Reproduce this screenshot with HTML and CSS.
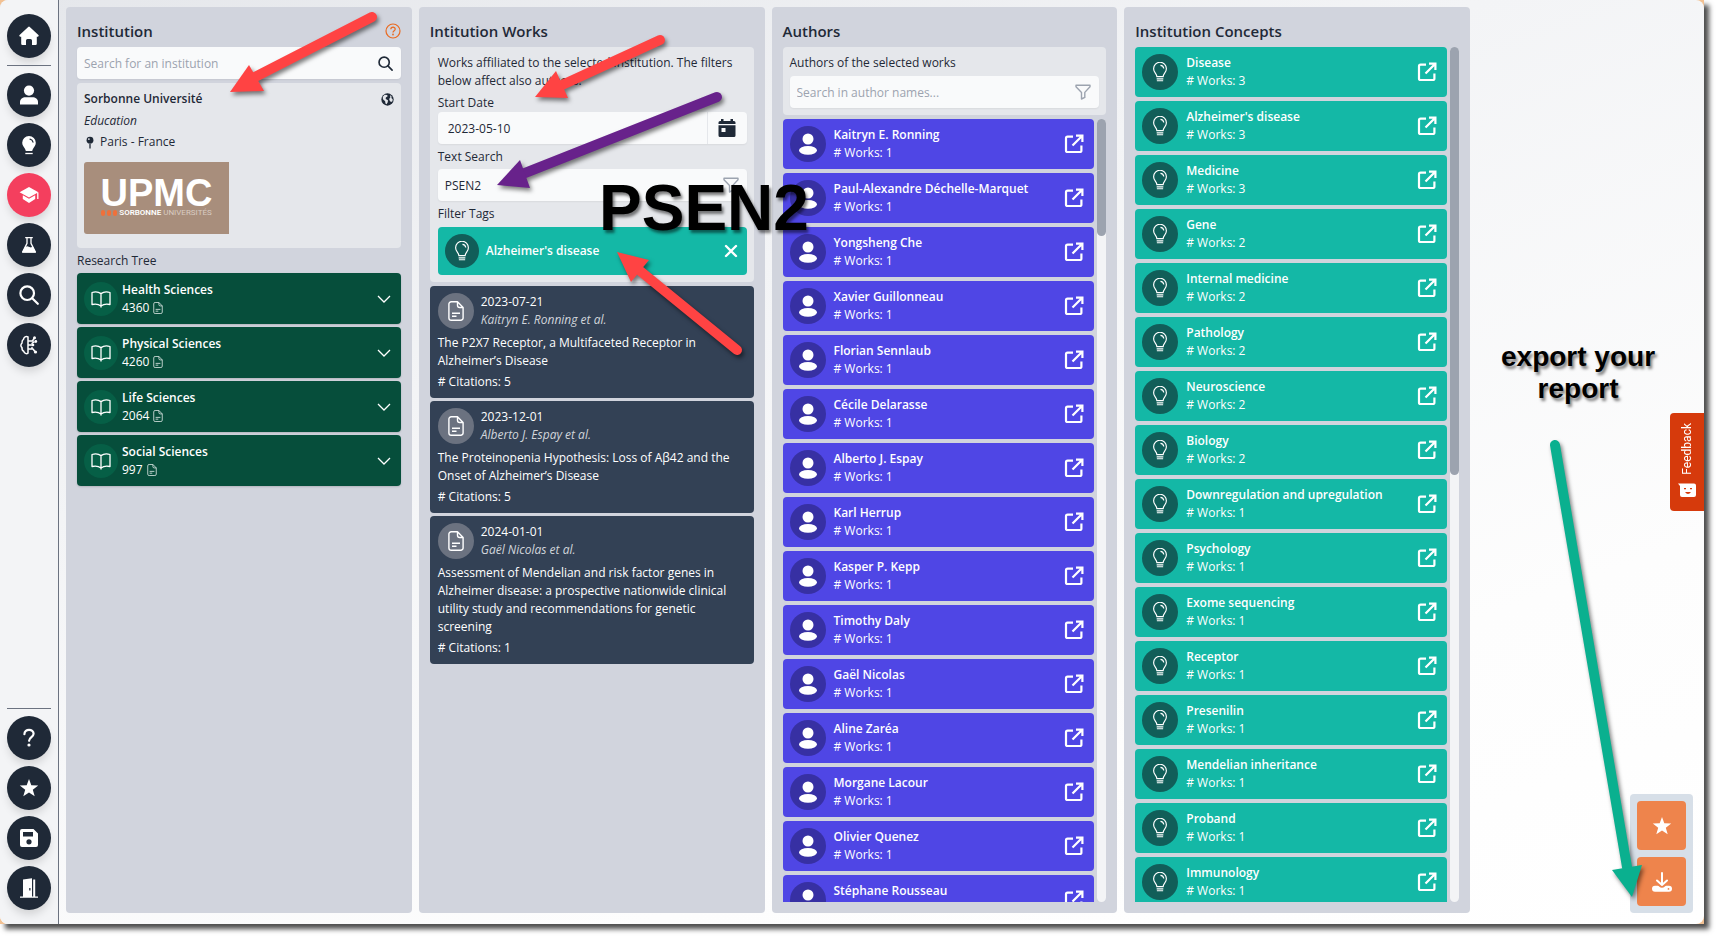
FILE: index.html
```html
<!DOCTYPE html>
<html lang="en">
<head>
<meta charset="utf-8">
<title>Institution explorer</title>
<link rel="stylesheet" href="styles.css">
</head>
<body>
<svg class="sprite" aria-hidden="true">
  <symbol id="home" viewBox="0 0 20 20"><path fill="currentColor" d="M9.2.9a1.2 1.2 0 0 1 1.6 0l8.6 8.2c.7.7.3 1.6-.6 1.6h-1v7a1.2 1.2 0 0 1-1.200 1.200H13v-4.500a1.500 1.500 0 0 0-1.500-1.500h-3A1.500 1.500 0 0 0 7 14.400v4.500H3.400a1.200 1.200 0 0 1-1.200-1.200v-7h-1c-.9 0-1.300-.9-.6-1.600z"/></symbol>
  <symbol id="person" viewBox="0 0 20 20"><circle cx="10" cy="5.600" r="5.100" fill="currentColor"/><path fill="currentColor" d="M1 19.400v-2.200c0-3.200 2.600-5 5.500-5h7c2.900 0 5.500 1.800 5.500 5v2.200z"/></symbol>
  <symbol id="avatar" viewBox="0 0 20 22"><circle cx="10" cy="6" r="5.500" fill="currentColor"/><ellipse cx="10" cy="17.300" rx="9" ry="4.400" fill="currentColor"/></symbol>
  <symbol id="bulb-solid" viewBox="0 0 20 20"><path fill="currentColor" d="M10 1a6.800 6.800 0 0 0-6.800 6.800c0 3 2 4.300 3 6.400.3.700.3 1.800 1 1.800h5.600c.7 0 .7-1.100 1-1.800 1-2.100 3-3.400 3-6.400A6.800 6.800 0 0 0 10 1z"/><path d="M11 4.200q2.500.5 3 3" fill="none" stroke="#1f2937" stroke-width="1.200" stroke-linecap="round"/><path d="M6.300 18.500h7.400" stroke="currentColor" stroke-width="1.300"/></symbol>
  <symbol id="bulb" viewBox="0 0 20 22"><g fill="none" stroke="currentColor" stroke-width="1.300"><path d="M6.500 16.200c0-3.600-3.600-4.600-3.600-8.900a7.100 7.100 0 0 1 14.200 0c0 4.300-3.600 5.300-3.600 8.900z" stroke-linejoin="round"/><path d="M10.500 3.600c2 .2 3.400 1.600 3.700 3.500M6.300 18.600h7.400M6.500 20.700h7"/></g></symbol>
  <symbol id="cap" viewBox="0 0 20 20"><path fill="currentColor" d="M10 2 .6 7.200 10 12.400l9.400-5.200z"/><path fill="currentColor" d="M3.800 10.200v3.700L10 18l6.200-4.100v-3.700L10 13.700z"/><path d="M18.800 7.500v6.500" stroke="currentColor" stroke-width="1.300"/></symbol>
  <symbol id="flask" viewBox="0 0 20 20"><path d="M6.200 2.600h7.600M8 2.600v5.800L3.600 17h12.800L12 8.400V2.600" fill="none" stroke="currentColor" stroke-width="1.300" stroke-linejoin="round"/><path fill="currentColor" d="m6 12 2.200-.8 3.800 1.300 1.800-1.300 3.200 6.300H3z"/></symbol>
  <symbol id="search" viewBox="0 0 20 20"><g fill="none" stroke="currentColor" stroke-width="2.200" stroke-linecap="round"><circle cx="8.200" cy="8.200" r="6.800"/><path d="m13.200 13.200 5.600 5.600"/></g></symbol>
  <symbol id="brain" viewBox="0 0 20 20"><g fill="none" stroke="currentColor" stroke-width="1.500" stroke-linejoin="round" stroke-linecap="round"><path d="M9 1.800C7 .8 4.800 2 4.500 4.400 2.500 5.600 3.200 7 3 8 1.400 9.500 1.600 11.500 3 12.600c-.2 2 .4 3 1.700 3.600.5 2.200 2.800 3 4.300 2zM9 6h4.500l1.500-2.500M9 10h4M9 14h5l1.500 2M13 8.300l2-1.300M13 14v-1.500"/></g><g fill="currentColor"><circle cx="15.500" cy="2.800" r="1.500"/><circle cx="16.800" cy="6.500" r="1.400"/><circle cx="14" cy="10" r="1.300"/><circle cx="16.500" cy="17" r="1.600"/></g></symbol>
  <symbol id="question" viewBox="0 0 20 20"><path d="M5.400 6.200c0-6 9.400-5.500 9.200-.4-.1 3.400-4.500 3.300-4.500 7" fill="none" stroke="currentColor" stroke-width="2.200" stroke-linecap="round"/><circle cx="10" cy="17" r="1.600" fill="currentColor"/></symbol>
  <symbol id="help-ring" viewBox="0 0 16 16"><circle cx="8" cy="8" r="7" fill="none" stroke="currentColor" stroke-width="1.200"/><path d="M5.800 6.300c.1-2.900 4.500-2.700 4.400-.1C10.100 7.700 8 7.700 8 9.500" fill="none" stroke="currentColor" stroke-width="1.200"/><circle cx="8" cy="11.500" r=".9" fill="currentColor"/></symbol>
  <symbol id="star" viewBox="0 0 20 20"><path fill="currentColor" d="m10 1 2.300 6.200 6.900.3-5.400 4.200 1.900 6.500L10 14.500l-5.700 3.700 1.900-6.500L.8 7.500l6.900-.3z"/></symbol>
  <symbol id="save" viewBox="0 0 20 20"><path fill="currentColor" fill-rule="evenodd" d="M3 1h11.500L19 5.500V17a2 2 0 0 1-2 2H3a2 2 0 0 1-2-2V3a2 2 0 0 1 2-2zm1 3v4.600h10V4zm6 7.200a2.600 2.600 0 1 0 0 5.200 2.600 2.600 0 0 0 0-5.200z"/></symbol>
  <symbol id="door" viewBox="0 0 20 20"><path fill="currentColor" fill-rule="evenodd" d="M4 1.600 13 .2v18.200h1.200V1.500h2V18.400H19v1.400H1v-1.400h3zM10.200 10v2.500h1.300V10z"/></symbol>
  <symbol id="globe" viewBox="0 0 16 16"><circle cx="8" cy="8" r="7.600" fill="currentColor"/><path fill="#e5e7eb" d="M2.200 4.500 4.600 2.200l3 .2.600 1.700L6 5.500l-.2 1.800L8.600 9l-.3 2.300-1.500 2.500-1.300-.8-.4-3L2.400 7.800zM11 2.500l2.200 2-.5 1.800 1.700 1.500-.3 2.400-1.700 1-1.500-1.500L10 7.500l1.500-2z"/></symbol>
  <symbol id="pin" viewBox="0 0 10 14"><circle cx="5" cy="4.500" r="3.700" fill="currentColor"/><path d="M5 8v5.500" stroke="currentColor" stroke-width="1.400"/><circle cx="3.800" cy="3.300" r="1" fill="#e5e7eb"/></symbol>
  <symbol id="book" viewBox="0 0 20 18"><path d="M10 3.600C7.500 1.800 4 1.600 1 2.500v12c3-.8 6.500-.5 9 1.500 2.500-2 6-2.300 9-1.500v-12c-3-.9-6.500-.7-9 1.100zm0 0V17.500" fill="none" stroke="currentColor" stroke-width="1.300" stroke-linejoin="round"/></symbol>
  <symbol id="doc" viewBox="0 0 16 20"><path d="M9.500.8H3.200A2.300 2.300 0 0 0 .9 3.100v13.800a2.300 2.300 0 0 0 2.300 2.300h9.600a2.300 2.300 0 0 0 2.300-2.300V6.500zM9.500.8v3.500a2.200 2.200 0 0 0 2.200 2.200h3.400M4 12.300h8M4 15.300h4.500" fill="none" stroke="currentColor" stroke-width="1.400" stroke-linejoin="round"/></symbol>
  <symbol id="chevron" viewBox="0 0 14 8"><path d="m1 1 6 6 6-6" fill="none" stroke="currentColor" stroke-width="1.300"/></symbol>
  <symbol id="calendar" viewBox="0 0 18 20"><path fill="currentColor" d="M3 1h2.500v2h7V1H15v2h1a1.500 1.500 0 0 1 1.500 1.500V6H.5V4.500A1.500 1.500 0 0 1 2 3h1z"/><path fill="currentColor" fill-rule="evenodd" d="M.5 7.200h17v10.300A1.500 1.500 0 0 1 16 19H2a1.500 1.500 0 0 1-1.500-1.500zM3.500 10v4h4v-4z"/></symbol>
  <symbol id="funnel" viewBox="0 0 16 16"><path d="M1 1.200h14v1.500L9.800 8.400v5L6.500 15V8.400L1 2.700z" fill="none" stroke="currentColor" stroke-width="1.400" stroke-linejoin="round"/></symbol>
  <symbol id="close" viewBox="0 0 14 14"><path d="m2 2 10 10M12 2 2 12" stroke="currentColor" stroke-width="2.400" stroke-linecap="round"/></symbol>
  <symbol id="external" viewBox="0 0 20 20"><path d="M9 2.600H3.600A1.600 1.600 0 0 0 2 4.200v12.200A1.600 1.600 0 0 0 3.600 18h12.200a1.600 1.600 0 0 0 1.600-1.600V11.500M12 1.600h6.400V8M18 2 8.500 11.600" fill="none" stroke="currentColor" stroke-width="2.200"/></symbol>
  <symbol id="download" viewBox="0 0 20 20"><path d="M10 1v11.500M5 8.500l5 4.500 5-4.500" fill="none" stroke="currentColor" stroke-width="2" stroke-linecap="round" stroke-linejoin="round"/><path fill="currentColor" fill-rule="evenodd" d="M3 13.700h2.800c1 0 2 2 4.200 2s3.200-2 4.200-2H17a3 3 0 0 1 0 6H3a3 3 0 0 1 0-6zm13.500 2.300a.9.900 0 1 0 0 1.800.9.900 0 0 0 0-1.800z"/></symbol>
  <symbol id="smile" viewBox="0 0 18 14"><path fill="#fff" d="M0 .5h16a2 2 0 0 1 2 2V12a2 2 0 0 1-2 2H4a2 2 0 0 1-2-2V3z"/><path fill="#d63a0c" d="M7 9h6q-3 4-6 0zM6 5h2v1.200H6zM12 5h2v1.200h-2z"/></symbol>
</svg>

<div class="window">
<div class="app">
  <nav class="sidebar" aria-label="Main">
    <div class="nav-group nav-top">
      <button class="nav-button" aria-label="Home"><svg><use href="#home"/></svg></button>
      <hr>
      <button class="nav-button" aria-label="Authors"><svg><use href="#person"/></svg></button>
      <button class="nav-button" aria-label="Concepts"><svg><use href="#bulb-solid"/></svg></button>
      <button class="nav-button active" aria-label="Institutions"><svg><use href="#cap"/></svg></button>
      <button class="nav-button" aria-label="Research"><svg><use href="#flask"/></svg></button>
      <button class="nav-button" aria-label="Search"><svg><use href="#search"/></svg></button>
      <button class="nav-button" aria-label="Knowledge"><svg><use href="#brain"/></svg></button>
    </div>
    <div class="nav-group">
      <hr>
      <button class="nav-button" aria-label="Help"><svg><use href="#question"/></svg></button>
      <button class="nav-button" aria-label="Favourites"><svg><use href="#star"/></svg></button>
      <button class="nav-button" aria-label="Save"><svg><use href="#save"/></svg></button>
      <button class="nav-button" aria-label="Log out"><svg><use href="#door"/></svg></button>
    </div>
  </nav>

  <main class="board">
    <section class="column">
      <header class="column-head"><h2>Institution</h2><button class="help" aria-label="About institutions"><svg><use href="#help-ring"/></svg></button></header>
      <div class="field search-field"><input type="text" aria-label="Search for an institution" placeholder="Search for an institution"><button aria-label="Search"><svg class="icon-dark"><use href="#search"/></svg></button></div>
      <article class="institution">
        <div class="institution-name"><h3>Sorbonne Université</h3><a href="#web" aria-label="Website"><svg><use href="#globe"/></svg></a></div>
        <p class="kind">Education</p>
        <p class="place"><svg><use href="#pin"/></svg>Paris - France</p>
        <div class="logo">
          <span class="logo-name">UPMC</span>
          <span class="logo-sub"><i></i><i></i><i></i><b>SORBONNE</b><span>UNIVERSITÉS</span></span>
        </div>
      </article>
      <h3 class="tree-title">Research Tree</h3>
      <div class="tree">
        <button class="card green"><span class="disc"><svg class="i-book"><use href="#book"/></svg></span><span class="card-text"><strong>Health Sciences</strong><span>4360 <svg><use href="#doc"/></svg></span></span><svg class="i-chevron"><use href="#chevron"/></svg></button>
        <button class="card green"><span class="disc"><svg class="i-book"><use href="#book"/></svg></span><span class="card-text"><strong>Physical Sciences</strong><span>4260 <svg><use href="#doc"/></svg></span></span><svg class="i-chevron"><use href="#chevron"/></svg></button>
        <button class="card green"><span class="disc"><svg class="i-book"><use href="#book"/></svg></span><span class="card-text"><strong>Life Sciences</strong><span>2064 <svg><use href="#doc"/></svg></span></span><svg class="i-chevron"><use href="#chevron"/></svg></button>
        <button class="card green"><span class="disc"><svg class="i-book"><use href="#book"/></svg></span><span class="card-text"><strong>Social Sciences</strong><span>997 <svg><use href="#doc"/></svg></span></span><svg class="i-chevron"><use href="#chevron"/></svg></button>
      </div>
    </section>

    <section class="column">
      <header class="column-head"><h2>Intitution Works</h2></header>
      <form class="panel filters">
        <p>Works affiliated to the selected institution. The filters below affect also authors.</p>
        <label for="start">Start Date</label>
        <div class="field date-field"><input id="start" type="text" value="2023-05-10"><button type="button" aria-label="Pick a date"><svg><use href="#calendar"/></svg></button></div>
        <label for="text">Text Search</label>
        <div class="field"><input id="text" type="text" value="PSEN2"><svg class="i-funnel"><use href="#funnel"/></svg></div>
        <h3>Filter Tags</h3>
        <div class="tag"><span class="disc"><svg class="i-bulb"><use href="#bulb"/></svg></span><strong>Alzheimer's disease</strong><button type="button" aria-label="Remove tag"><svg><use href="#close"/></svg></button></div>
      </form>
      <div class="works">
        <article class="work"><header><span class="disc"><svg class="i-doc"><use href="#doc"/></svg></span><div><time>2023-07-21</time><em>Kaitryn E. Ronning et al.</em></div></header><p>The P2X7 Receptor, a Multifaceted Receptor in Alzheimer’s Disease</p><footer># Citations: 5</footer></article>
        <article class="work"><header><span class="disc"><svg class="i-doc"><use href="#doc"/></svg></span><div><time>2023-12-01</time><em>Alberto J. Espay et al.</em></div></header><p>The Proteinopenia Hypothesis: Loss of Aβ42 and the Onset of Alzheimer’s Disease</p><footer># Citations: 5</footer></article>
        <article class="work"><header><span class="disc"><svg class="i-doc"><use href="#doc"/></svg></span><div><time>2024-01-01</time><em>Gaël Nicolas et al.</em></div></header><p>Assessment of Mendelian and risk factor genes in Alzheimer disease: a prospective nationwide clinical utility study and recommendations for genetic screening</p><footer># Citations: 1</footer></article>
      </div>
    </section>

    <section class="column">
      <header class="column-head"><h2>Authors</h2></header>
      <div class="panel author-filter">
        <label for="author">Authors of the selected works</label>
        <div class="field"><input id="author" type="text" placeholder="Search in author names..."><svg class="i-funnel"><use href="#funnel"/></svg></div>
      </div>
      <div class="scroller">
        <ul class="list" id="authors"></ul>
        <div class="track"><div class="thumb thumb-authors"></div></div>
      </div>
    </section>

    <section class="column">
      <header class="column-head"><h2>Institution Concepts</h2></header>
      <div class="scroller">
        <ul class="list" id="concepts"></ul>
        <div class="track"><div class="thumb thumb-concepts"></div></div>
      </div>
    </section>

    <aside class="side">
      <div class="export">
        <button aria-label="Add to favourites"><svg><use href="#star"/></svg></button>
        <button aria-label="Export report"><svg><use href="#download"/></svg></button>
      </div>
    </aside>
  </main>
  <button class="feedback"><svg><use href="#smile"/></svg><span>Feedback</span></button>
</div>
</div>

<svg class="notes" aria-hidden="true">
  <g fill="#ff4343" stroke="#ff4343" stroke-width="10" stroke-linecap="round">
    <path d="M372 17 255 77"/><path stroke="none" d="m230 92 19-27 15 26z"/>
    <path d="m660 40-98 45"/><path stroke="none" d="m535 97 21-26 12 27z"/>
    <path d="m737 350-98-80"/><path stroke="none" d="m617 252 32 8-18 22z"/>
  </g>
  <g fill="#68228b" stroke="#68228b" stroke-width="10" stroke-linecap="round"><path d="m717 97-192 76"/><path stroke="none" d="m497 185 23-25 10 28z"/></g>
  <g fill="#0ab08f" stroke="#0ab08f" stroke-width="10" stroke-linecap="round"><path d="m1555 445 72 422"/><path stroke="none" d="m1632 897-20-27 30-5z"/></g>
</svg>
<p class="note note-gene">PSEN2</p>
<p class="note note-export">export your<br>report</p>
<script src="lists.js"></script>
</body>
</html>
```

FILE: lists.js
```js
const authors = ["Kaitryn E. Ronning", "Paul-Alexandre Déchelle-Marquet", "Yongsheng Che", "Xavier Guillonneau", "Florian Sennlaub", "Cécile Delarasse", "Alberto J. Espay", "Karl Herrup", "Kasper P. Kepp", "Timothy Daly", "Gaël Nicolas", "Aline Zaréa", "Morgane Lacour", "Olivier Quenez", "Stéphane Rousseau"].map(name => [name, 1]);
const concepts = [["Disease", 3], ["Alzheimer's disease", 3], ["Medicine", 3], ["Gene", 2], ["Internal medicine", 2], ["Pathology", 2], ["Neuroscience", 2], ["Biology", 2], ["Downregulation and upregulation", 1], ["Psychology", 1], ["Exome sequencing", 1], ["Receptor", 1], ["Presenilin", 1], ["Mendelian inheritance", 1], ["Proband", 1], ["Immunology", 1]];

function fill(id, rows, tone, icon) {
  document.getElementById(id).innerHTML = rows.map(([name, works]) =>
    `<li class="card ${tone}"><span class="disc"><svg class="i-${icon}"><use href="#${icon}"/></svg></span>` +
    `<div class="card-text"><strong>${name}</strong><span># Works: ${works}</span></div>` +
    `<a class="open" href="#open" aria-label="Open ${name}"><svg><use href="#external"/></svg></a></li>`).join("");
}

fill("authors", authors, "indigo", "avatar");
fill("concepts", concepts, "teal", "bulb");
```

FILE: styles.css
```css
* { box-sizing: border-box; }
html, body { height: 100%; }
body {
  margin: 0;
  padding: 0 15px 15px 0;
  overflow: hidden;
  background: #fff;
  color: #1f2937;
  font: 12px/18px "Open Sans", "Noto Sans", sans-serif;
}
h2, h3, p, ul { margin: 0; padding: 0; }
h3 { font-size: 12px; font-weight: 400; }
button { margin: 0; padding: 0; border: 0; background: none; color: inherit; font: inherit; cursor: pointer; }
svg { display: block; flex: none; }
a { color: inherit; }
.sprite { position: absolute; width: 0; height: 0; }

.window { height: 100%; background: #f2c193; box-shadow: 5px 5px 5px rgba(0, 0, 0, .7); }
.app {
  position: relative;
  display: flex;
  height: 100%;
  border-radius: 8px;
  background: linear-gradient(160deg, #e5e7eb 0%, #f3f4f6 35%, #fdfdfd 75%, #fff 100%);
}

.sidebar {
  display: flex;
  flex-direction: column;
  justify-content: space-between;
  flex: none;
  width: 59px;
  padding: 14px 7px;
  border-right: 1px solid #6b7280;
  border-radius: 8px 0 0 8px;
  background: #f3f4f6;
}
.nav-group { display: flex; flex-direction: column; gap: 6px; }
.nav-group hr { width: 100%; height: 1px; margin: 1px 0; border: 0; background: #6b7280; }
.nav-button {
  display: grid;
  place-items: center;
  width: 44px;
  height: 44px;
  border-radius: 50%;
  background: #1f2937;
  color: #fff;
  box-shadow: 0 6px 10px -2px rgba(0, 0, 0, .15);
}
.nav-button svg { width: 20px; height: 20px; }
.nav-button.active { background: #f43f5e; }

.board { display: flex; flex: 1; min-width: 0; gap: 7px; padding: 7px 0 11px 7px; }
.column {
  display: flex;
  flex-direction: column;
  flex: 1 1 0;
  min-width: 0;
  padding: 11px;
  border-radius: 4px;
  background: #d1d4dd;
}
.column-head { display: flex; align-items: center; justify-content: space-between; flex: none; height: 29px; padding-bottom: 3px; }
.column-head h2 { font-size: 15px; font-weight: 600; line-height: 24px; }
.help { color: #ea6a20; }
.help svg { width: 16px; height: 16px; }

.field {
  display: flex;
  align-items: center;
  height: 32px;
  border-radius: 4px;
  background: #f9fafb;
  box-shadow: 0 1px 2px rgba(0, 0, 0, .06);
}
.field input {
  flex: 1;
  min-width: 0;
  height: 100%;
  padding: 0 7px;
  border: 0;
  outline: 0;
  background: none;
  color: inherit;
  font: inherit;
}
.field input::placeholder { color: #9ca3af; opacity: 1; }
.search-field { flex: none; padding-right: 8px; }
.search-field svg { width: 15px; height: 15px; }
.i-funnel { width: 16px; height: 16px; margin-right: 8px; color: #9ca3af; }
.date-field input { padding: 0 10px; }
.date-field button { display: grid; place-items: center; width: 40px; height: 100%; border-left: 1px solid #e5e7eb; }
.date-field svg { width: 18px; height: 20px; }

.institution { flex: none; height: 165px; margin-top: 4px; padding: 7px; border-radius: 4px; background: #e5e7eb; }
.institution-name { display: flex; justify-content: space-between; align-items: center; height: 18px; }
.institution-name h3 { font-weight: 600; }
.institution-name svg { width: 13px; height: 13px; }
.kind { margin-top: 4px; font-style: italic; }
.place { display: flex; align-items: center; gap: 5px; margin-top: 3px; padding-left: 1px; }
.place svg { width: 10px; height: 13px; }
.logo {
  width: 145px;
  height: 72px;
  margin-top: 11px;
  padding-top: 15px;
  border-radius: 3px 0 0 3px;
  background: #a88e7c;
  color: #fff;
  text-align: center;
}
.logo-name { display: block; font: 700 38px/32px "Liberation Sans", sans-serif; }
.logo-sub { display: flex; justify-content: center; align-items: center; gap: 2px; font: 8px/8px Roboto, sans-serif; }
.logo-sub b { font-weight: 600; }
.logo-sub i { width: 4px; height: 6px; border-radius: 2px; background: #f0703a; }
.logo-sub > span { color: #d9ccc2; }

.tree-title { margin: 4px 0 3px; }
.tree { display: grid; gap: 3px; }
.card { display: flex; align-items: center; height: 50px; padding: 0 10px 0 7px; border-radius: 4px; color: #fff; text-align: left; list-style: none; }
.disc { display: grid; place-items: center; flex: none; width: 36px; height: 36px; border-radius: 50%; }
.card-text { display: flex; flex-direction: column; flex: 1; min-width: 0; margin-left: 8px; white-space: nowrap; }
.card-text strong, .tag strong { font-weight: 600; }
.card-text span { display: flex; align-items: center; gap: 4px; }
.card-text span svg { width: 10px; height: 12px; opacity: .85; }
.green { height: 51px; background: #064e3b; box-shadow: 0 1px 2px rgba(0, 0, 0, .15); }
.green .disc { width: 34px; height: 34px; background: #065f46; }
.green .card-text { margin-left: 4px; }
.indigo { background: #4f46e5; }
.indigo .disc { background: #3730a3; }
.teal { background: #14b8a6; }
.teal .disc, .tag .disc { background: #115e59; }
.i-book { width: 20px; height: 18px; }
.i-chevron { width: 14px; height: 8px; }
.i-bulb { width: 18px; height: 20px; }
.i-avatar { width: 20px; height: 22px; }
.open svg { width: 20px; height: 20px; }

.panel { flex: none; padding: 7px; border-radius: 4px; background: #e5e7eb; }
.panel label, .filters h3 { display: block; }
.filters { padding-left: 8px; }
.filters label { margin-top: 4px; }
.filters .field + label { padding-bottom: 3px; }
.filters .field + h3 { margin: 4px 0; }
.author-filter label { margin-bottom: 4px; }
.tag { display: flex; align-items: center; gap: 7px; height: 48px; padding: 0 9px 0 7px; border-radius: 4px; background: #14b8a6; color: #fff; }
.tag .disc { width: 34px; height: 34px; }
.tag strong { flex: 1; }
.tag button svg { width: 14px; height: 14px; }

.works { display: grid; gap: 3px; margin-top: 4px; }
.work { padding: 7px 7px 7px 8px; border-radius: 4px; background: #334155; color: #fff; }
.work header { display: flex; gap: 7px; margin-bottom: 5px; }
.work header div { display: grid; }
.work .disc { background: #6b7280; }
.i-doc { width: 16px; height: 20px; }
.work em { color: #d1d5db; }
.work footer { margin-top: 3px; }

.scroller { display: flex; flex: 1; gap: 3px; min-height: 0; }
.panel + .scroller { margin-top: 4px; }
.list { flex: 1; min-width: 0; overflow: hidden; }
.list .card + .card { margin-top: 4px; }
.track { flex: none; width: 9px; border-radius: 5px; background: #f3f4f6; }
.thumb { border-radius: 5px; background: #9ca3af; }
.thumb-authors { height: 15%; }
.thumb-concepts { height: 50%; }

.side { display: flex; flex: none; flex-direction: column; align-items: flex-end; justify-content: flex-end; width: 227px; padding-right: 11px; }
.export { display: grid; gap: 7px; padding: 7px; border-radius: 4px; background: #d7dfe8; }
.export button { display: grid; place-items: center; width: 49px; height: 49px; border-radius: 4px; background: #ee844c; color: #fff; }
.export svg { width: 20px; height: 20px; }

.feedback {
  position: absolute;
  top: 413px;
  right: 0;
  display: flex;
  flex-direction: column-reverse;
  align-items: center;
  justify-content: space-between;
  width: 34px;
  height: 98px;
  padding: 10px 0 14px;
  border-radius: 4px 0 0 4px;
  background: #d63a0c;
  color: #fff;
  font: 12px/18px Roboto, sans-serif;
}
.feedback span { writing-mode: vertical-rl; rotate: 180deg; }
.feedback svg { width: 18px; height: 14px; }

.notes { position: absolute; top: 0; left: 0; width: 100%; height: 100%; pointer-events: none; filter: drop-shadow(2px 3px 2px rgba(0, 0, 0, .5)); }
.note { position: absolute; color: #000; font-family: "Liberation Sans", sans-serif; font-weight: 700; text-align: center; text-shadow: 2px 3px 3px rgba(0, 0, 0, .5); pointer-events: none; }
.note-gene { top: 172px; left: 599px; font-size: 64px; line-height: 72px; }
.note-export { top: 341px; left: 1501px; font-size: 28px; line-height: 32px; }
```
